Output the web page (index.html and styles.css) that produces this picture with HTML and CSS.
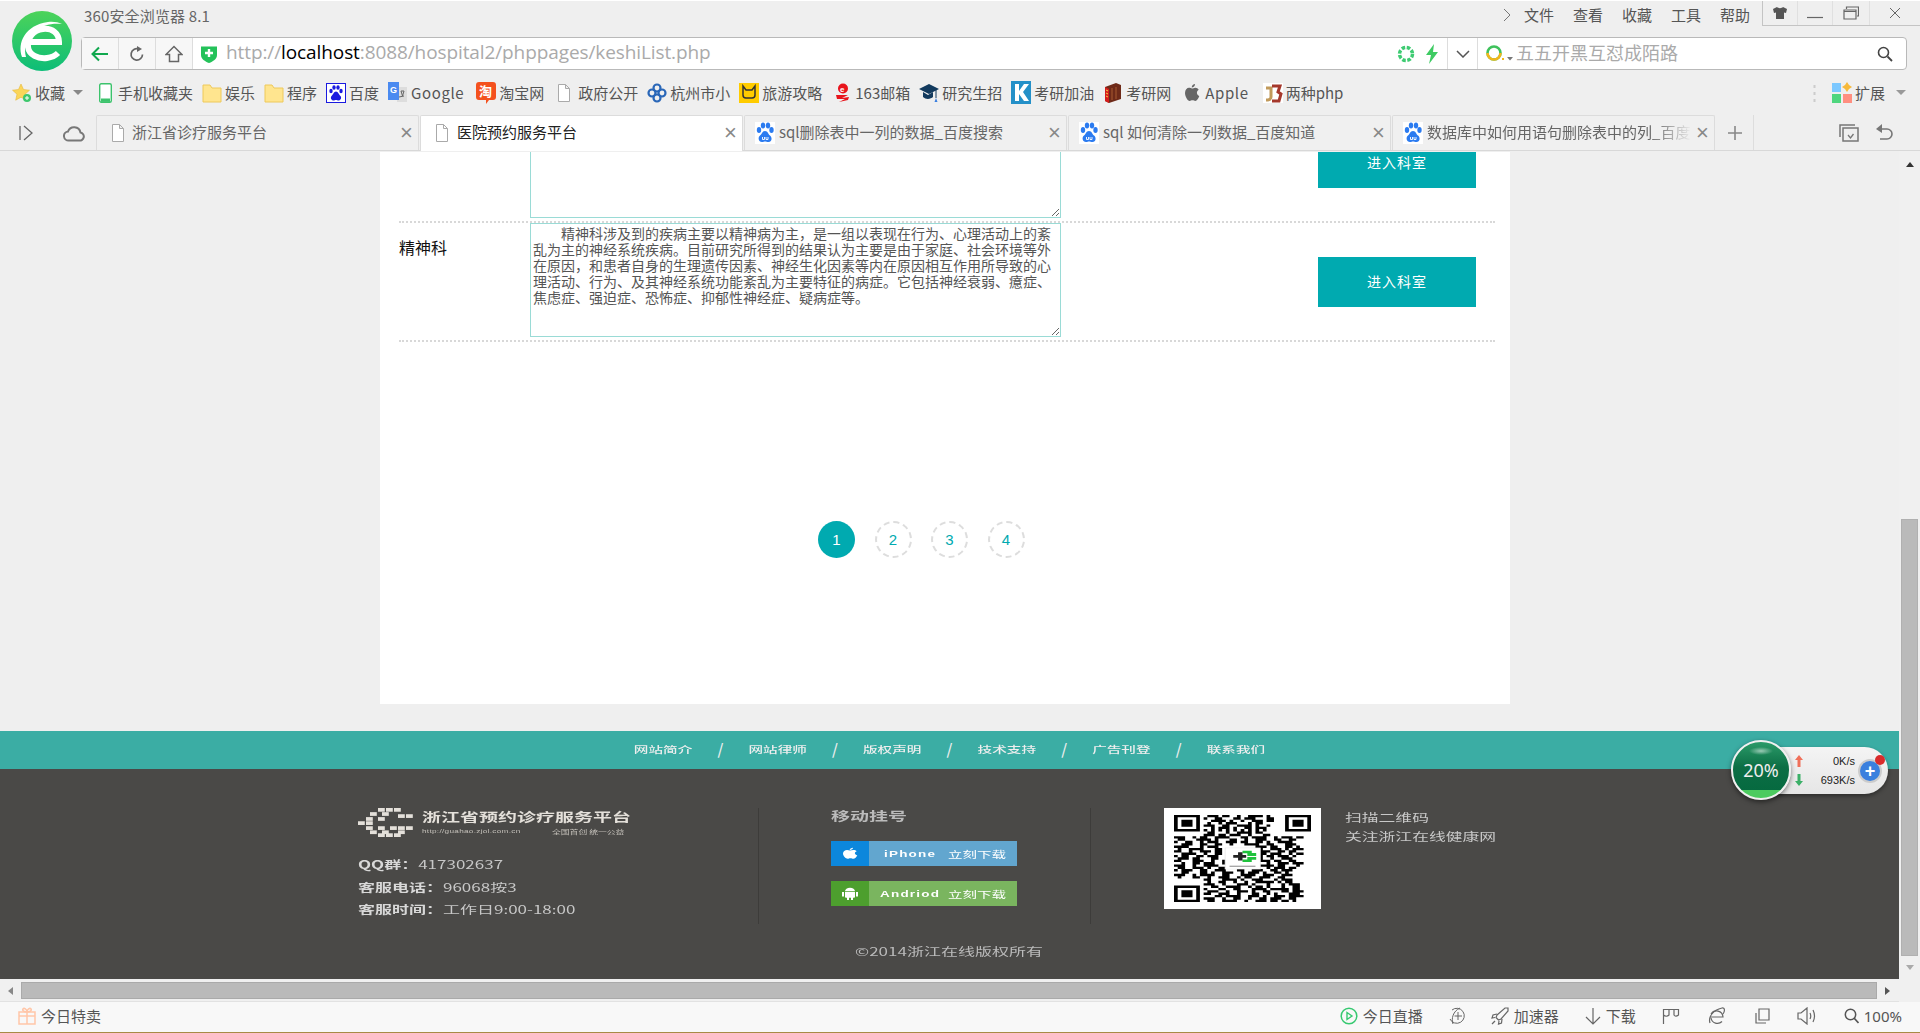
FILE: index.html
```html
<!DOCTYPE html>
<html lang="zh">
<head>
<meta charset="utf-8">
<title>医院预约服务平台</title>
<link rel="stylesheet" href="styles.css">
</head>
<body>
<svg class="defs" width="0" height="0">
  <defs>
    <symbol id="doc" viewBox="0 0 14 18"><path d="M1.500 .5h7l4 4v13h-11z M8.500 .5v4h4" fill="#fff" stroke="#aaa"/></symbol>
    <symbol id="folder" viewBox="0 0 20 20"><path d="M1 2h7l2 3h9v14H1z" fill="#ffe58f" stroke="#eec95a"/></symbol>
    <symbol id="paw" viewBox="0 0 20 22"><rect width="20" height="22" fill="#fff"/><g fill="#2b7bf0"><ellipse cx="4" cy="8" rx="2.200" ry="3"/><ellipse cx="8" cy="3.500" rx="2.200" ry="3"/><ellipse cx="13" cy="3.500" rx="2.200" ry="3"/><ellipse cx="16.500" cy="8" rx="2.200" ry="3"/><path d="M10 9c-3 0-3 3-5 4.500-2.500 2-1.500 6.500 2 6.500 1.500 0 2-.5 3-.5s2 .5 3.500 .5c3.500 0 4-4.500 1.500-6.500C13 12 13 9 10 9z"/></g><path d="M7.500 15v2.500h2V15M11 15v2.500h2V15" fill="none" stroke="#fff" stroke-width=".9"/></symbol>
  </defs>
</svg>
<div class="browser">
  <header class="top">
    <div class="logo-col">
      <svg class="logo" viewBox="0 0 60 60" width="60" height="60">
        <defs><linearGradient id="lg" x1="0" y1="0" x2="0" y2="1"><stop offset="0" stop-color="#4cd35a"/><stop offset="1" stop-color="#0dbd78"/></linearGradient></defs>
        <ellipse cx="30" cy="30" rx="30" ry="30" fill="url(#lg)"/>
        <path d="M17 31H47C47 22 40 17 31 18 21 19 15 27 16 36 17 44 26 48 35 47 39 46.500 43 45 46 42" fill="none" stroke="#fff" stroke-width="6"/>
        <path d="M10 46C5 32 13 14 36 11 41 10.500 46 11 50 13 42 12 30 13 21 22 13 30 12 38 14 46z" fill="#fff"/>
      </svg>
    </div>
    <div class="top-main">
      <div class="titlebar">
        <span class="app-title">360安全浏览器 8.1</span>
        <nav class="menu">
          <svg class="menu-arrow" viewBox="0 0 8 14" width="8" height="14"><path d="M1 1l6 6-6 6" fill="none" stroke="#777"/></svg>
          <span>文件</span><span>查看</span><span>收藏</span><span>工具</span><span>帮助</span>
        </nav>
        <div class="winbtns">
          <span class="winbtn w-shirt"><svg viewBox="0 0 14 12" width="14" height="12"><path d="M4 0L0 2l1 4 2-.5V12h8V5.500l2 .5 1-4-4-2c-1 1.500-5 1.500-6 0z" fill="#555"/></svg></span>
          <span class="winbtn w-min"><svg viewBox="0 0 16 12" width="16" height="12"><path d="M0 10.500h16" stroke="#666" stroke-width="1.200"/></svg></span>
          <span class="winbtn w-max"><svg viewBox="0 0 16 14" width="16" height="14"><path d="M1 4h12v9H1zM1 4V5.500H13M3.500 3V1h12v9H14" fill="none" stroke="#666" stroke-width="1.200"/></svg></span>
          <span class="winbtn w-close"><svg viewBox="0 0 12 12" width="12" height="12"><path d="M1 1l10 10M11 1L1 11" stroke="#666"/></svg></span>
        </div>
      </div>
      <div class="navrow">
        <div class="addr">
          <span class="nbtn"><svg viewBox="0 0 18 16" width="18" height="16"><path d="M17 8H2M8 1.500L1.500 8 8 14.500" fill="none" stroke="#10a84e" stroke-width="2"/></svg></span>
          <span class="nbtn"><svg viewBox="0 0 16 16" width="16" height="16"><path d="M13.500 8.500A5.700 5.700 0 1 1 9.500 3" fill="none" stroke="#666" stroke-width="1.700"/><path d="M8 0l5 3-5 3z" fill="#666"/></svg></span>
          <span class="nbtn"><svg viewBox="0 0 18 18" width="18" height="18"><path d="M1 9.500L9 1.500l8 8h-3.500v7h-9v-7z" fill="none" stroke="#666" stroke-width="1.500"/></svg></span>
          <svg class="shield" viewBox="0 0 16 18" width="16" height="18"><path d="M0 1.500h16V10c0 4-4 6.500-8 8-4-1.500-8-4-8-8z" fill="#24c25a"/><path d="M8 4v8M4 8h8" stroke="#fff" stroke-width="2.400"/></svg>
          <span class="url">http://<b>localhost</b>:8088/hospital2/phppages/keshiList.php</span>
          <svg class="ring" viewBox="0 0 18 18" width="18" height="18"><circle cx="9" cy="9" r="6.500" fill="none" stroke="#3ecb72" stroke-width="3.500" stroke-dasharray="3.500 1.600"/></svg>
          <svg class="bolt" viewBox="0 0 14 20" width="14" height="20"><path d="M9 0L1 11h5l-2 9 9-12H8z" fill="#3ecb63"/></svg>
          <span class="addr-drop"><svg viewBox="0 0 14 8" width="14" height="8"><path d="M1 1l6 6 6-6" fill="none" stroke="#555" stroke-width="1.500"/></svg></span>
          <div class="search">
            <svg class="so" viewBox="0 0 28 20" width="28" height="20"><circle cx="9" cy="9" r="6.500" fill="none" stroke="#3fc25c" stroke-width="2.600"/><path d="M2.500 9a6.500 6.500 0 0 0 13 0" fill="none" stroke="#f2b61b" stroke-width="2.600"/><rect x="17" y="14" width="2" height="2" fill="#f2b61b"/><path d="M22 13h6l-3 3.500z" fill="#777"/></svg>
            <span class="search-text">五五开黑互怼成陌路</span>
            <svg class="mag" viewBox="0 0 16 16" width="16" height="16"><circle cx="6.500" cy="6.500" r="5" fill="none" stroke="#444" stroke-width="1.600"/><path d="M10.500 10.500l4.500 4.500" stroke="#444" stroke-width="1.800"/></svg>
          </div>
        </div>
      </div>
    </div>
  </header>

  <div class="bookmarks">
    <span class="bm bm-fav"><svg viewBox="0 0 20 20" width="20" height="20"><path d="M9 1l2.500 5.500 6 .7-4.500 4 1.300 6L9 14.200 3.700 17.200 5 11.200.5 7.200l6-.7z" fill="#fbd65a" stroke="#e8b93a" stroke-width=".6"/><circle cx="15" cy="15" r="4" fill="#3ec76d"/><path d="M15 13v4M13 15h4" stroke="#fff"/></svg>收藏<svg class="caret" viewBox="0 0 10 5" width="10" height="5"><path d="M0 0h10L5 5z" fill="#888"/></svg></span>
    <span class="bm bm-phone"><svg viewBox="0 0 13 20" width="13" height="20"><rect x=".7" y=".7" width="11.600" height="18.600" rx="1.500" fill="#fff" stroke="#3cc36c" stroke-width="1.400"/><rect x="2" y="15.500" width="9" height="3.400" fill="#3cc36c"/></svg>手机收藏夹</span>
    <span class="bm"><svg width="20" height="20"><use href="#folder"/></svg>娱乐</span>
    <span class="bm"><svg width="20" height="20"><use href="#folder"/></svg>程序</span>
    <span class="bm"><svg viewBox="0 0 20 20" width="20" height="20"><rect x=".5" y=".5" width="19" height="19" fill="#fff" stroke="#1a1ae0"/><g fill="#1a1ae0"><ellipse cx="5" cy="8" rx="1.700" ry="2.300"/><ellipse cx="8" cy="4.500" rx="1.700" ry="2.300"/><ellipse cx="12" cy="4.500" rx="1.700" ry="2.300"/><ellipse cx="15" cy="8" rx="1.700" ry="2.300"/><path d="M10 8.500c-2 0-3 3-4.500 4.500-1.500 2 0 4.500 2 4.500 1 0 1.500-.5 2.500-.5s1.500 .5 2.500 .5c2 0 3.500-2.500 2-4.500-1.500-1.500-2.500-4.500-4.500-4.500z"/></g></svg>百度</span>
    <span class="bm bm-latin bm-google"><svg viewBox="0 0 20 22" width="20" height="22"><path d="M9 5h10v15H9z" fill="#ddd"/><path d="M13 9h3l-1.500 5zM11 15l5-1" stroke="#666" fill="none"/><path d="M0 0h11v18H0z" fill="#4a8af0"/><text class="g-letter" x="2" y="11">G</text></svg>Google</span>
    <span class="bm"><svg viewBox="0 0 20 22" width="20" height="22"><path d="M3 0h14a3 3 0 0 1 3 3v12a3 3 0 0 1-3 3H13l-3 4v-4H3a3 3 0 0 1-3-3V3a3 3 0 0 1 3-3z" fill="#f4511e"/><text class="tao-letter" x="3" y="14">淘</text></svg>淘宝网</span>
    <span class="bm bm-doc"><svg width="14" height="18"><use href="#doc"/></svg>政府公开</span>
    <span class="bm"><svg viewBox="0 0 20 20" width="20" height="20"><g fill="none" stroke="#2a67b8" stroke-width="2.200"><circle cx="10" cy="5" r="3.500"/><circle cx="5" cy="10" r="3.500"/><circle cx="15" cy="10" r="3.500"/><circle cx="10" cy="15" r="3.500"/></g></svg>杭州市小</span>
    <span class="bm"><svg viewBox="0 0 20 20" width="20" height="20"><rect width="20" height="20" fill="#ffcc00"/><path d="M4 3v9c0 2 1 3 3 3h6c2 0 3-1 3-3V3l-3 4H7z" fill="none" stroke="#333" stroke-width="1.500"/></svg>旅游攻略</span>
    <span class="bm bm-163"><svg viewBox="0 0 18 20" width="18" height="20"><circle cx="9" cy="5.500" r="5" fill="#e8141c"/><text class="e-letter" x="6" y="8.500">e</text><path d="M2 12h12l-6 3 7-1-1 3-9 2 6-3-8 0z" fill="#e8141c"/></svg>163邮箱</span>
    <span class="bm"><svg viewBox="0 0 20 22" width="20" height="22"><path d="M0 7l10-5 10 5-10 5z" fill="#123a5e"/><path d="M4 10v5c3 3 8 2 10 0v-5l-5 3z" fill="#123a5e"/><path d="M17 8v8" stroke="#123a5e"/><path d="M17 16l-1.500 4h3z" fill="#3a7fe0"/></svg>研究生招</span>
    <span class="bm"><svg viewBox="0 0 20 23" width="20" height="23"><rect width="20" height="23" fill="#2490c8"/><path d="M4 3h4v7l5-7h5l-6 8 6 9h-5l-5-7v7H4z" fill="#fff"/></svg>考研加油</span>
    <span class="bm"><svg viewBox="0 0 20 22" width="20" height="22"><path d="M2 5l11-4 5 2v14L6 21 2 19z" fill="#6e2a18"/><path d="M2 5v14l4 2V7z" fill="#d41c1c"/><path d="M3 8l2 1M3 11l2 1M3 14l2 1" stroke="#f6d040"/><path d="M9 6v12M13 5v12" stroke="#a85a30"/></svg>考研网</span>
    <span class="bm bm-apple bm-latin"><svg viewBox="0 0 16 20" width="16" height="20"><path d="M11 1c0 2-1.500 3.500-3.300 3.500C7.700 2.500 9.500 1 11 1zM8 5.500c1 0 2-.8 3.300-.8 1.500 0 2.700.8 3.400 2-2.700 1.700-2.200 5.200.6 6.300-.8 2.200-2.300 5-4 5-1 0-1.500-.7-2.800-.7s-1.800.7-2.800.7C3.700 18 1 13.500 1 10c0-3.200 2-5.200 4-5.200 1.300 0 2.200.7 3 .7z" fill="#666"/></svg>Apple</span>
    <span class="bm bm-php"><svg viewBox="0 0 20 20" width="20" height="20"><rect width="20" height="20" fill="#fff"/><path d="M3 5h5v9c0 2-2 3-5 3" fill="none" stroke="#c19a5b" stroke-width="3"/><path d="M9 3h8l-2 6 3 2-2 7H9" fill="none" stroke="#a5382c" stroke-width="3"/></svg>两种php</span>
    <span class="bm-end">
      <svg class="bm-dots" viewBox="0 0 3 20" width="3" height="20"><path d="M1.500 2v3M1.500 9v3M1.500 16v3" stroke="#ccc" stroke-width="2"/></svg>
      <svg viewBox="0 0 20 22" width="20" height="22"><rect x="0" y="1" width="9" height="9" fill="#7cc8ff"/><rect x="0" y="12" width="9" height="9" fill="#4fd67e"/><rect x="11" y="12" width="9" height="9" fill="#ff8f80"/><path d="M15 0l2 3 3 2-3 2-2 3-2-3-3-2 3-2z" fill="#f6b93b"/></svg>
      <span>扩展</span>
      <svg class="caret" viewBox="0 0 10 5" width="10" height="5"><path d="M0 0h10L5 5z" fill="#999"/></svg>
    </span>
  </div>

  <div class="tabs">
    <div class="tab-tools">
      <svg viewBox="0 0 14 16" width="14" height="16"><path d="M1 1v14M5 1l8 7-8 7" fill="none" stroke="#666" stroke-width="1.300"/></svg>
      <svg viewBox="0 0 22 18" width="22" height="18"><path d="M6 16.500a4.500 4.500 0 0 1-1-9 6.500 6.500 0 0 1 12.500 1A4 4 0 0 1 16 16.500z" fill="none" stroke="#777" stroke-width="2"/></svg>
    </div>
    <div class="tab tab-doc"><svg width="14" height="18"><use href="#doc"/></svg><span class="tab-text">浙江省诊疗服务平台</span><span class="tab-x">×</span></div>
    <div class="tab tab-doc tab-active"><svg width="14" height="18"><use href="#doc"/></svg><span class="tab-text">医院预约服务平台</span><span class="tab-x">×</span></div>
    <div class="tab"><svg width="20" height="22"><use href="#paw"/></svg><span class="tab-text">sql删除表中一列的数据_百度搜索</span><span class="tab-x">×</span></div>
    <div class="tab"><svg width="20" height="22"><use href="#paw"/></svg><span class="tab-text">sql 如何清除一列数据_百度知道</span><span class="tab-x">×</span></div>
    <div class="tab"><svg width="20" height="22"><use href="#paw"/></svg><span class="tab-text tab-text-fade">数据库中如何用语句删除表中的列_百度</span><span class="tab-x">×</span></div>
    <span class="tab-plus"><svg viewBox="0 0 14 14" width="14" height="14"><path d="M7 0v14M0 7h14" stroke="#888" stroke-width="1.600"/></svg></span>
    <div class="tab-right">
      <svg viewBox="0 0 20 18" width="20" height="18"><path d="M1 13V1h15M4 17V4h15v13z" fill="none" stroke="#777" stroke-width="1.500"/><path d="M9 11l2.500 3 3-4" fill="none" stroke="#777" stroke-width="1.300"/></svg>
      <svg viewBox="0 0 18 18" width="18" height="18"><path d="M3 5h9a5 5 0 0 1 0 10H5" fill="none" stroke="#777" stroke-width="1.600"/><path d="M7 0L1 5l6 4z" fill="#777"/></svg>
    </div>
  </div>

  <div class="viewport">
    <div class="view-main">
      <main class="page">
        <section class="panel">
          <div class="row row-first">
            <div class="dept"></div>
            <textarea class="desc desc-clip" readonly></textarea>
            <a class="enter enter-clip">进入科室</a>
          </div>
          <div class="row row-second">
            <div class="dept">精神科</div>
            <textarea class="desc" readonly>　　精神科涉及到的疾病主要以精神病为主，是一组以表现在行为、心理活动上的紊乱为主的神经系统疾病。目前研究所得到的结果认为主要是由于家庭、社会环境等外在原因，和患者自身的生理遗传因素、神经生化因素等内在原因相互作用所导致的心理活动、行为、及其神经系统功能紊乱为主要特征的病症。它包括神经衰弱、癔症、焦虑症、强迫症、恐怖症、抑郁性神经症、疑病症等。</textarea>
            <a class="enter enter-full">进入科室</a>
          </div>
          <div class="pager">
            <a class="pg pg-on">1</a><a class="pg">2</a><a class="pg">3</a><a class="pg">4</a>
          </div>
        </section>
        <footer class="site-foot">
          <nav class="foot-nav">
            <span class="sq">网站简介</span><i>/</i><span class="sq">网站律师</span><i>/</i><span class="sq">版权声明</span><i>/</i><span class="sq">技术支持</span><i>/</i><span class="sq">广告刊登</span><i>/</i><span class="sq">联系我们</span>
          </nav>
          <div class="foot-dark">
            <div class="foot-cols">
              <div class="fc fc-1">
                <div class="brand">
                  <svg class="brand-mark" viewBox="0 0 14 7" width="56" height="29" preserveAspectRatio="none"><g fill="#e4e0da"><rect x="5" y="0" width="1.700" height=".9"/><rect x="7" y="0" width="1.700" height=".9"/><rect x="9" y="0" width="1.700" height=".9"/><rect x="3" y="1" width="1.700" height=".9"/><rect x="6" y="1" width="1.700" height=".9"/><rect x="10" y="1.500" width="1.700" height=".9"/><rect x="12" y="1.500" width="1.700" height=".9"/><rect x="2" y="2.200" width="1.700" height=".9"/><rect x="5" y="2.200" width="1.700" height=".9"/><rect x="0" y="3.200" width="1.700" height=".9"/><rect x="2" y="3.200" width="1.700" height=".9"/><rect x="2" y="4.400" width="1.700" height=".9"/><rect x="5" y="4.400" width="1.700" height=".9"/><rect x="8" y="4.400" width="1.700" height=".9"/><rect x="10" y="4.400" width="1.700" height=".9"/><rect x="12" y="4.400" width="1.700" height=".9"/><rect x="3" y="5.400" width="1.700" height=".9"/><rect x="6" y="5.400" width="1.700" height=".9"/><rect x="10" y="5.400" width="1.700" height=".9"/><rect x="5" y="6.100" width="1.700" height=".9"/><rect x="7" y="6.100" width="1.700" height=".9"/><rect x="9" y="6.100" width="1.700" height=".9"/></g></svg>
                  <div class="brand-text">
                    <span class="sq brand-name">浙江省预约诊疗服务平台</span>
                    <div class="brand-sub">
                      <span class="sq brand-url">http://guahao.zjol.com.cn</span>
                      <span class="sq brand-slogan">全国首创 统一公益</span>
                    </div>
                  </div>
                </div>
                <p class="sq info"><b>QQ群：</b>417302637</p>
                <p class="sq info"><b>客服电话：</b>96068按3</p>
                <p class="sq info"><b>客服时间：</b>工作日9:00-18:00</p>
              </div>
              <div class="fc fc-2">
                <p class="sq mobile-title">移动挂号</p>
                <a class="dl dl-ios">
                  <span class="dl-ic"><svg viewBox="0 0 16 20" width="16" height="13" preserveAspectRatio="none"><path d="M11 1c0 2-1.500 3.500-3.300 3.500C7.700 2.500 9.500 1 11 1zM8 5.500c1 0 2-.8 3.300-.8 1.500 0 2.700.8 3.400 2-2.700 1.700-2.200 5.200.6 6.300-.8 2.200-2.300 5-4 5-1 0-1.500-.7-2.800-.7s-1.800.7-2.800.7C3.700 18 1 13.500 1 10c0-3.200 2-5.200 4-5.200 1.300 0 2.200.7 3 .7z" fill="#fff"/></svg></span>
                  <span class="sq dl-name dl-name-ios">iPhone</span><span class="sq dl-now">立刻下载</span>
                </a>
                <a class="dl dl-and">
                  <span class="dl-ic"><svg viewBox="0 0 18 18" width="18" height="13" preserveAspectRatio="none"><path d="M4 6h10a5 5 0 0 0-10 0zM4 7h10v7a1 1 0 0 1-1 1h-1v3h-2v-3H8v3H6v-3H5a1 1 0 0 1-1-1zM1 7h2v6H1zM15 7h2v6h-2z" fill="#fff"/></svg></span>
                  <span class="sq dl-name">Andriod</span><span class="sq dl-now">立刻下载</span>
                </a>
              </div>
              <div class="fc fc-3">
                <div class="qr">
                  <svg viewBox="0 0 37 37" width="137" height="87" preserveAspectRatio="none">
                    <g fill="none" stroke="#000">
                      <path d="M.5 .5h6v6h-6zM30.500 .5h6v6h-6zM.5 30.500h6v6h-6z"/>
                    </g>
                    <path d="M2 2h3v3H2zM32 2h3v3h-3zM2 32h3v3H2z"/>
                    <path stroke="#000" fill="none" d="M9 .5h3m1 0h2m2 0h1m2 0h4m1 0h1M8 1.500h1m2 0h2m3 0h2m1 0h3m3 0h2M10 2.500h4m1 0h1m2 0h1m2 0h3m1 0h2M9 3.500h1m2 0h1m1 0h3m3 0h1m1 0h2M8 4.500h3m2 0h2m2 0h4m1 0h1m2 0h1M10 5.500h1m1 0h3m1 0h1m2 0h2m1 0h3M8 6.500h1m1 0h1m1 0h1m1 0h1m1 0h1m1 0h1m1 0h1m1 0h1m1 0h1M9 7.500h2m3 0h1m2 0h4m1 0h2M8 8.500h3m1 0h2m1 0h3m2 0h1m3 0h2M0 9.500h3m2 0h1m1 0h2m2 0h4m3 0h2m1 0h4m2 0h1m1 0h3m1 0h2M1 10.500h2m3 0h4m1 0h1m3 0h2m2 0h1m2 0h3m2 0h2m2 0h2M0 11.500h1m2 0h2m2 0h1m1 0h3m2 0h3m1 0h2m2 0h2m1 0h1m2 0h4M2 12.500h3m2 0h2m2 0h2m2 0h1m3 0h4m2 0h2m3 0h3M0 13.500h4m3 0h1m1 0h3m10 0h3m1 0h2m2 0h2m1 0h1M1 14.500h1m2 0h4m3 0h2m10 0h1m2 0h3m1 0h1m1 0h3M0 15.500h2m2 0h1m2 0h3m1 0h2m10 0h3m2 0h2m1 0h2M2 16.500h4m2 0h1m2 0h2m10 0h2m1 0h3m2 0h1m1 0h2M0 17.500h1m1 0h2m2 0h2m1 0h3m11 0h1m1 0h2m1 0h3m1 0h1M1 18.500h3m1 0h2m3 0h2m10 0h2m2 0h1m2 0h3M0 19.500h2m3 0h3m2 0h1m2 0h1m9 0h3m1 0h2m2 0h2M2 20.500h1m2 0h2m1 0h3m2 0h2m10 0h1m2 0h3m1 0h3M0 21.500h3m2 0h1m2 0h4m2 0h1m8 0h4m1 0h2m3 0h1M1 22.500h2m2 0h3m1 0h1m2 0h2m1 0h3m3 0h2m2 0h1m1 0h3m1 0h2M0 23.500h1m1 0h3m2 0h2m2 0h3m3 0h2m2 0h3m2 0h2m1 0h3M2 24.500h2m3 0h2m1 0h1m2 0h3m2 0h1m1 0h3m1 0h1m2 0h2m1 0h1M0 25.500h3m2 0h1m1 0h4m2 0h2m3 0h4m2 0h3m2 0h3M1 26.500h1m3 0h2m2 0h1m2 0h3m2 0h1m1 0h2m2 0h3m2 0h2M8 27.500h2m3 0h4m1 0h1m2 0h3m3 0h1m1 0h3M9 28.500h1m2 0h2m2 0h1m2 0h1m2 0h5m1 0h1m1 0h2M8 29.500h3m2 0h1m3 0h3m1 0h1m3 0h1m3 0h1m1 0h3M10 30.500h2m2 0h4m2 0h1m1 0h2m1 0h1m3 0h1m2 0h2M8 31.500h1m3 0h2m2 0h2m3 0h4m1 0h5m1 0h2M9 32.500h3m2 0h1m2 0h3m1 0h1m2 0h2m3 0h2m1 0h3M8 33.500h2m2 0h3m2 0h1m3 0h2m2 0h1m1 0h1m3 0h3M11 34.500h2m1 0h4m2 0h3m1 0h1m2 0h3m1 0h4M8 35.500h3m2 0h1m2 0h2m2 0h1m2 0h2m1 0h3m2 0h2M9 36.500h2m2 0h4m2 0h1m2 0h3m1 0h2m1 0h2m1 0h1"/>
                    <rect x="13.800" y="14" width="9.500" height="9" fill="#fff" stroke="#e4e4e4" stroke-width=".2"/>
                    <path d="M18.500 15.200h2.500v1h1.200v1.200h-2.400v-1.100h-1.300zM18.500 20h2.500v-1h1.200v-1.100h-2.400v1h-1.300z" fill="#1fc23c"/>
                    <path d="M16 17h1.300v-1.200h1.200v1.200H19.500v1.200H18.500v1.200h-1.200v-1.200H16z" fill="#222"/>
                    <path d="M15 21.800h7" stroke="#999" stroke-width=".5"/>
                  </svg>
                </div>
                <div class="qr-note">
                  <p class="sq">扫描二维码</p>
                  <p class="sq">关注浙江在线健康网</p>
                </div>
              </div>
            </div>
            <p class="sq copyright">©2014浙江在线版权所有</p>
          </div>
        </footer>
      </main>
      <div class="hscroll">
        <svg class="h-arrow" viewBox="0 0 5 8" width="5" height="8"><path d="M5 0v8L0 4z" fill="#888"/></svg>
        <div class="h-thumb"></div>
        <svg class="h-arrow" viewBox="0 0 5 8" width="5" height="8"><path d="M0 0v8l5-4z" fill="#555"/></svg>
      </div>
    </div>
    <aside class="vscroll">
      <svg class="v-up" viewBox="0 0 8 5" width="8" height="5"><path d="M0 5h8L4 0z" fill="#333"/></svg>
      <div class="v-thumb"></div>
      <svg class="v-down" viewBox="0 0 8 5" width="8" height="5"><path d="M0 0h8L4 5z" fill="#aaa"/></svg>
    </aside>
    <div class="netball">
      <div class="net-pill">
        <div class="net-rates">
          <div class="net-line"><svg viewBox="0 0 8 12" width="8" height="12"><path d="M4 0l4 5H5.500v7h-3V5H0z" fill="#f0705a"/></svg><span>0K/s</span></div>
          <div class="net-line"><svg viewBox="0 0 8 12" width="8" height="12"><path d="M4 12l4-5H5.500V0h-3v7H0z" fill="#3cb068"/></svg><span>693K/s</span></div>
        </div>
        <span class="net-plus">+<i class="net-dot"></i></span>
      </div>
      <div class="net-ball"><span>20%</span></div>
    </div>
  </div>

  <footer class="status">
    <span class="st-left"><svg viewBox="0 0 18 18" width="18" height="18"><g fill="none" stroke="#ffc6a8" stroke-width="1.500"><rect x="1" y="5" width="16" height="12"/><path d="M1 9h16M9 5v12M9 5C6 5 4 3.500 5 2s4 0 4 3c0-3 3-4.500 4-3s-1 3-4 3"/></g></svg>今日特卖</span>
    <span class="st-right">
      <span class="st st-live"><svg viewBox="0 0 18 18" width="18" height="18"><circle cx="9" cy="9" r="7.800" fill="none" stroke="#37c971" stroke-width="1.500"/><path d="M7 5.500l5 3.500-5 3.500z" fill="none" stroke="#37c971" stroke-width="1.400"/></svg>今日直播</span>
      <span class="st st-clock"><svg viewBox="0 0 18 18" width="18" height="18"><g fill="none" stroke="#666"><path d="M4 3a7.500 7.500 0 1 1-2 9"/><path d="M5 17C3 12 5 4 12 1"/><path d="M10 5v8M6.500 9H14"/></g></svg></span>
      <span class="st st-rocket"><svg viewBox="0 0 18 18" width="18" height="18"><g fill="none" stroke="#666" stroke-width="1.200"><path d="M6 8L14 1l3 0 0 3-7 8-2.500 1L5 10.500z"/><path d="M6 7L2 8l-1 3 3-.5M11 12l-.5 4-3 1 .5-3"/><path d="M4 14l-3 3"/></g></svg>加速器</span>
      <span class="st st-dl"><svg viewBox="0 0 16 18" width="16" height="18"><path d="M8 1v16M1 10l7 7 7-7" fill="none" stroke="#666" stroke-width="1.200"/></svg>下载</span>
      <span class="st st-flag"><svg viewBox="0 0 18 16" width="18" height="16"><path d="M1.500 16V1.500h15V7c-2 1.500-3.500 1.500-4.500 0V1.500M7 1.500V7c-1.500 1.500-4 1.500-5.500 0" fill="none" stroke="#666" stroke-width="1.200"/></svg></span>
      <span class="st st-ie"><svg viewBox="0 0 18 18" width="18" height="18"><g fill="none" stroke="#666" stroke-width="1.200"><path d="M2 16C0 10 5 3 14 1 17 .5 17 4 15 7"/><path d="M2 10h13a6.500 6.500 0 0 0-12-3M3 11a6.500 6.500 0 0 0 11 3.500"/></g></svg></span>
      <span class="st st-copy"><svg viewBox="0 0 15 16" width="15" height="16"><path d="M4 1h10v11H4zM4 12V1M1 5v10h10" fill="none" stroke="#666" stroke-width="1.200"/></svg></span>
      <span class="st st-vol"><svg viewBox="0 0 20 18" width="20" height="18"><path d="M1 6h3l6-5v16l-6-5H1z M13 6c1 2 1 4 0 6M16 3c2 4 2 8 0 12" fill="none" stroke="#666" stroke-width="1.200"/></svg></span>
      <span class="st st-zoom"><svg viewBox="0 0 15 16" width="15" height="16"><circle cx="6.500" cy="6.500" r="5.200" fill="none" stroke="#555" stroke-width="1.500"/><path d="M10 10l4.500 5" stroke="#555" stroke-width="1.700"/></svg>100%</span>
    </span>
  </footer>
  <div class="wallstrip"></div>
</div>
</body>
</html>
```

FILE: styles.css
```css
* { box-sizing: border-box; }
html, body { margin: 0; padding: 0; height: 100%; overflow: hidden; }
body { font-family: "Noto Sans CJK SC", "Noto Sans", sans-serif; color: #555; background: #efefef; }
p { margin: 0; }
.defs { position: absolute; }
svg { display: block; flex: none; }

.browser { width: 1920px; height: 1033px; display: flex; flex-direction: column; background: #efefef; border-top: 1px solid #fff; overflow: hidden; }

/* top */
.top { display: flex; height: 69px; flex: none; }
.logo-col { width: 81px; flex: none; padding: 10px 0 0 12px; }
.top-main { flex: 1; display: flex; flex-direction: column; min-width: 0; }
.titlebar { height: 36px; display: flex; align-items: flex-start; position: relative; }
.app-title { font-size: 15px; line-height: 18px; margin: 6px 0 0 3px; color: #666; letter-spacing: .15px; }
.menu { margin-left: auto; display: flex; gap: 19px; align-items: center; font-size: 15px; line-height: 22px; height: 28px; color: #555; }
.menu-arrow { margin-right: -6px; }
.winbtns { margin-left: 12px; display: flex; height: 25px; border-left: 1px solid #c4c4c4; border-bottom: 1px solid #c4c4c4; }
.winbtn { display: flex; align-items: center; justify-content: center; height: 24px; border-right: 1px solid #e0e0e0; }
.w-shirt { width: 35px; }
.w-min { width: 35px; }
.w-max { width: 37px; }
.w-close { width: 50px; border-right: 0; }
.navrow { height: 33px; padding-right: 13px; }
.addr { height: 33px; display: flex; align-items: center; border: 1px solid #b9b9b9; border-radius: 4px; background: #fff; }
.nbtn { width: 37px; height: 31px; display: flex; align-items: center; justify-content: center; background: #f7f7f7; border-right: 1px solid #ddd; }
.shield { margin-left: 8px; }
.url { font-family: "Open Sans", "Noto Sans", sans-serif; font-size: 19px; line-height: 27px; color: #aaa; margin: -2px 0 0 9px; white-space: nowrap; letter-spacing: -.1px; }
.url b { font-weight: 400; color: #000; }
.ring { margin-left: auto; }
.bolt { margin-left: 10px; margin-right: 8px; }
.addr-drop { width: 31px; height: 31px; display: flex; align-items: center; justify-content: center; border-left: 1px solid #ddd; border-right: 1px solid #ddd; }
.search { width: 428px; height: 31px; display: flex; align-items: center; padding-left: 7px; }
.search-text { font-size: 18px; line-height: 27px; color: #aaa; margin: -2px 0 0 3px; white-space: nowrap; }
.mag { margin-left: auto; margin-right: 13px; }

/* bookmarks */
.bookmarks { height: 45px; flex: none; display: flex; align-items: center; padding: 0 0 0 12px; font-size: 15px; color: #555; gap: 9px; white-space: nowrap; }
.bm { display: flex; align-items: center; gap: 3px; }
.bm-fav { gap: 3px; margin-right: 7px; }
.bm-fav .caret { margin-left: 5px; }
.bm-phone { gap: 6px; }
.bm-latin { letter-spacing: .6px; }
.bm-google { margin-right: 3px; }
.bm-doc { gap: 7px; margin-left: 4px; }
.bm-163 { margin-left: 3px; }
.bm-apple { gap: 5px; margin-left: 4px; }
.bm-php { margin-left: 5px; }
.bm-end { margin-left: auto; display: flex; align-items: center; margin-right: 14px; }
.bm-dots { margin-right: 16px; }
.bm-end span { margin-left: 3px; }
.bm-end .caret { margin-left: 11px; }
.g-letter { font: 700 9px "Liberation Sans", sans-serif; fill: #fff; }
.tao-letter { font: 700 13px "Noto Sans CJK SC", sans-serif; fill: #fff; }
.e-letter { font: 700 8px "Liberation Sans", sans-serif; fill: #fff; }

/* tabs */
.tabs { height: 36px; flex: none; display: flex; align-items: flex-end; border-bottom: 1px solid #d8d8d8; font-size: 15px; position: relative; }
.tab-tools { width: 96px; height: 35px; flex: none; display: flex; align-items: center; padding-left: 19px; gap: 30px; }
.tab { width: 323px; height: 35px; flex: none; margin-right: 1px; display: flex; align-items: center; padding-left: 10px; gap: 4px; background: #f0f0f0; border: 1px solid #dcdcdc; border-bottom: 0; border-radius: 2px 2px 0 0; color: #666; }
.tab-doc { padding-left: 14px; gap: 7px; }
.tab-active { background: #fff; color: #222; position: relative; height: 36px; margin-bottom: -1px; gap: 8px; padding-bottom: 1px; }
.tab-text { white-space: nowrap; overflow: hidden; flex: 1; min-width: 0; line-height: 22px; margin-top: -2px; }
.tab-text-fade { -webkit-mask-image: linear-gradient(90deg, #000 85%, transparent 100%); mask-image: linear-gradient(90deg, #000 85%, transparent 100%); }
.tab-x { width: 18px; flex: none; font: 300 22px/22px "Liberation Sans", sans-serif; color: #888; text-align: left; }
.tab-plus { width: 38px; display: flex; justify-content: center; align-items: center; height: 35px; border-right: 1px solid #ddd; margin-left: 0; }
.tab-right { margin-left: auto; display: flex; align-items: center; gap: 16px; height: 35px; padding-right: 27px; }

/* viewport */
.viewport { flex: 1; display: flex; position: relative; min-height: 0; }
.view-main { flex: 1; display: flex; flex-direction: column; min-width: 0; }
.page { flex: 1; min-height: 0; overflow: hidden; padding-top: 1px; }
.panel { width: 1130px; height: 552px; margin-left: 380px; padding: 0 15px 0 19px; background: #fff; }
.row { display: flex; border-bottom: 2px dotted #d8d8d8; align-items: flex-start; }
.row-first { height: 71px; }
.row-second { height: 119px; padding-top: 0; }
.dept { width: 131px; flex: none; font-size: 16px; color: #111; margin-top: 12px; line-height: 24px; }
.desc { width: 531px; height: 114px; flex: none; margin: 0; padding: 1px 2px; border: 1px solid #9adbd6; font: 14px/16px "Noto Sans CJK SC", sans-serif; color: #555; background: #fff; outline: none; display: block; }
.desc-clip { height: 66px; border-top: 0; }
.enter { width: 158px; height: 50px; margin: 34px 0 0 257px; flex: none; background: #00aab0; color: #fff; font-size: 14px; display: flex; align-items: center; justify-content: center; letter-spacing: 1px; }
.enter-full { padding-bottom: 2px; }
.enter-clip { height: 36px; margin-top: 0; align-items: flex-start; padding-top: 1px; line-height: 18px; }
.pager { display: flex; gap: 19.500px; padding: 179px 0 0 419px; }
.pg { width: 37px; height: 37px; border: 2px dashed #ddd; border-radius: 50%; font: 15px/33px "Liberation Sans", sans-serif; text-align: center; color: #00aab0; }
.pg-on { background: #00aab0; border-color: #00aab0; color: #fff; }

/* footer */
.site-foot { margin-top: 27px; }
.sq { display: block; transform: scaleY(.65); transform-origin: left center; white-space: nowrap; }
.foot-nav { height: 38px; background: #3bada4; display: flex; justify-content: center; align-items: center; font-size: 14.600px; color: #eee; line-height: 20px; font-weight: 500; padding-bottom: 2px; }
.foot-nav i { width: 56.200px; text-align: center; font-style: normal; font-size: 15px; }
.foot-dark { height: 210px; background: #4a4947; padding-top: 39px; color: #ccc; }
.foot-cols { display: flex; height: 116px; }
.fc { height: 116px; }
.fc-1 { width: 400px; margin-left: 358px; flex: none; }
.fc-2 { width: 332px; flex: none; border-left: 1px solid #3d3c3a; padding-left: 72px; }
.fc-3 { flex: 1; display: flex; border-left: 1px solid #3d3c3a; padding-left: 73px; gap: 24px; }
.brand { display: flex; height: 29px; gap: 8px; margin-bottom: 16px; color: #e4e0da; }
.brand-text { flex: 1; }
.brand-name { font-size: 19px; line-height: 18px; font-weight: 700; }
.brand-sub { display: flex; height: 11px; }
.brand-url { font: 8.200px/11px "Liberation Sans", sans-serif; letter-spacing: .3px; width: 130px; color: #c4c0ba; }
.brand-slogan { font-size: 8.800px; line-height: 13px; letter-spacing: 0; color: #c4c0ba; }
.info { font-size: 17px; line-height: 22.700px; color: #c8c8c8; font-family: "Noto Sans CJK SC", sans-serif; }
.info b { font-weight: 700; color: #d8d8d8; }
.mobile-title { font-size: 19px; line-height: 18px; font-weight: 700; color: #bbb; margin: -1px 0 16px; }
.dl { display: flex; width: 186px; height: 25px; margin-bottom: 15px; align-items: center; color: #fff; }
.dl-ios { background: #62a6cf; }
.dl-and { background: #7ab55f; }
.dl-ic { width: 38px; height: 25px; flex: none; display: flex; align-items: center; justify-content: center; }
.dl-ios .dl-ic { background: #0c87dc; }
.dl-and .dl-ic { background: #4d9f2e; }
.dl-name { font: 700 13.500px/16px "Liberation Sans", sans-serif; letter-spacing: 1.200px; width: 79px; padding-left: 11px; }
.dl-name-ios { padding-left: 15px; }
.dl-now { font-size: 14.500px; line-height: 16px; }
.qr { width: 157px; height: 101px; background: #fff; padding: 7px 10px; flex: none; }
.qr-note { padding-top: 0; font-size: 16.800px; line-height: 19px; color: #c8c8c8; }
.copyright { margin: 18px 0 0 855px; font-size: 17px; line-height: 18px; color: #bbb; }

/* scrollbars */
.hscroll { height: 22px; flex: none; display: flex; align-items: center; background: #f0f0f0; padding: 0 9px 0 8px; gap: 8px; border-bottom: 1px solid #e2e2e2; }
.h-thumb { flex: 1; height: 17px; background: #bababa; border: 1px solid #aaa; }
.vscroll { width: 21px; flex: none; display: flex; flex-direction: column; align-items: center; background: #f0f0f0; }
.v-up { margin-top: 11px; }
.v-thumb { width: 17px; height: 437px; margin-top: 352px; background: #bababa; border: 1px solid #b0b0b0; }
.v-down { margin-top: 9px; }

/* floating speed ball */
.netball { position: absolute; left: 1731px; top: 589px; width: 160px; height: 60px; }
.net-pill { position: absolute; left: 24px; top: 7px; width: 133px; height: 47px; border-radius: 24px; background: linear-gradient(#f4f4f4, #e6e6e6); box-shadow: 0 2px 4px rgba(0,0,0,.4); display: flex; align-items: center; padding-left: 40px; }
.net-rates { width: 60px; display: flex; flex-direction: column; gap: 2px; font: 11px/17px "Liberation Sans", sans-serif; color: #222; }
.net-line { display: flex; align-items: center; justify-content: space-between; }
.net-plus { position: relative; margin-left: 5px; width: 20px; height: 20px; border-radius: 50%; background: #3a80de; color: #fff; font: 700 18px/20px "Liberation Sans", sans-serif; text-align: center; box-shadow: 0 0 0 2px #ccc; }
.net-dot { position: absolute; right: -5px; top: -6px; width: 10px; height: 10px; border-radius: 50%; background: #d92c2c; }
.net-ball { position: absolute; left: 0; top: 0; width: 60px; height: 60px; border-radius: 50%; border: 2px solid #f0f0f0; background: radial-gradient(ellipse 12px 4px at 50% 9px, rgba(255,255,255,.55), rgba(255,255,255,0)), linear-gradient(#2a9a68 0, #0c6e45 45%, #066a40 85%, #4ccb5f 85%); color: #eee; font: 18px/56px "Noto Sans", sans-serif; text-align: center; box-shadow: 0 2px 5px rgba(0,0,0,.5); }

/* status bar */
.status { height: 30px; flex: none; display: flex; align-items: center; justify-content: space-between; background: #f8f8f8; font-size: 15px; line-height: 22px; color: #555; white-space: nowrap; padding-bottom: 2px; }
.st-left { display: flex; align-items: center; gap: 5px; padding-left: 18px; }
.st-right { display: flex; align-items: center; padding-right: 18px; }
.st { display: flex; align-items: center; gap: 5px; }
.st-clock { margin-left: 25px; }
.st-rocket { margin-left: 25px; }
.st-dl { margin-left: 26px; }
.st-flag { margin-left: 26px; }
.st-ie { margin-left: 28px; }
.st-copy { margin-left: 29px; }
.st-vol { margin-left: 27px; }
.st-zoom { margin-left: 27px; font-family: "Noto Sans", sans-serif; }
.wallstrip { height: 1px; flex: none; background: #a78a45; }
```
